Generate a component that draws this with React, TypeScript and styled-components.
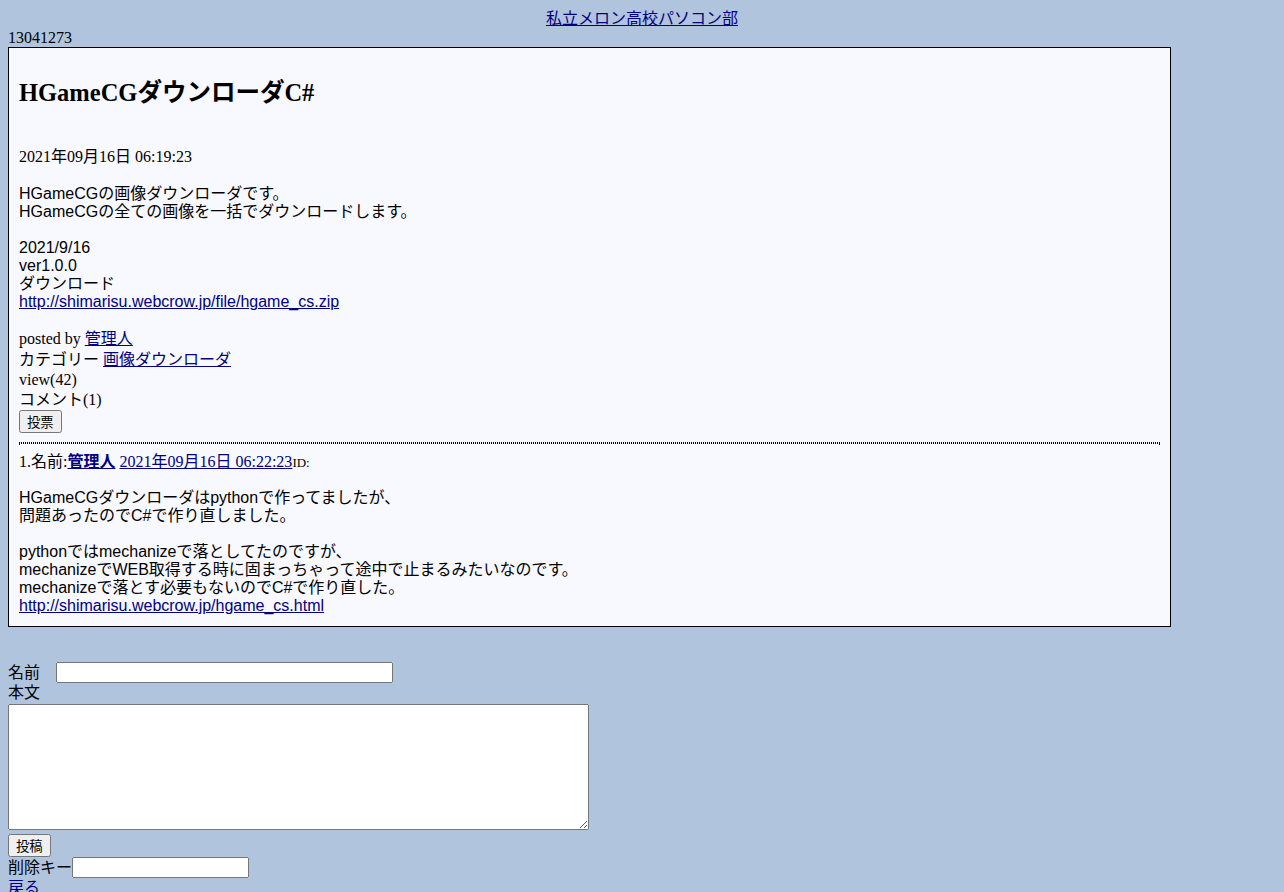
import styled, { createGlobalStyle } from "styled-components";

const GlobalStyle = createGlobalStyle`
  body {
    margin: 8px;
    background-color: #b0c4de;
    color: #000;
    font-family: "Liberation Serif", "Noto Sans CJK JP", serif;
    font-size: 16px;
  }
  a {
    color: #000080;
  }
`;

const Header = styled.div`
  text-align: center;
  line-height: 21px;
`;

const Counter = styled.div`
  line-height: 18px;
`;

const Entry = styled.div`
  width: 90%;
  padding: 10px 10px 11px;
  border: 1px solid #000;
  background-color: #f8f8ff;
`;

const Title = styled.h2`
  margin: 20px 0 0;
  font-size: 24.5px;
  line-height: 29px;
  font-weight: bold;
`;

const Stamp = styled.div`
  margin-top: 41px;
  line-height: 18px;
`;

const Body = styled.div<{ $gap?: number }>`
  margin-top: ${({ $gap }) => $gap ?? 18}px;
  font-family: "Liberation Sans", "Noto Sans CJK JP", sans-serif;
  font-size: 16px;
  line-height: 18px;
`;

const Meta = styled.div`
  margin-top: 18px;
`;

const Line = styled.div<{ $h?: number }>`
  line-height: ${({ $h }) => $h ?? 20}px;
`;

const Button = styled.button<{ $h: number }>`
  display: block;
  box-sizing: border-box;
  height: ${({ $h }) => $h}px;
  padding: 0 6px;
  font-family: "Noto Sans CJK JP", sans-serif;
  font-size: 13.33px;
  line-height: 16px;
`;

const Rule = styled.hr`
  margin: 9px 0 8px;
  height: 0;
  border: 1px dotted #000;
`;

const CommentHead = styled.div`
  line-height: 20px;
`;

const Small = styled.span`
  font-size: 13px;
`;

const Form = styled.form`
  margin-top: 35px;
  font-family: "Liberation Sans", "Noto Sans CJK JP", sans-serif;
  font-size: 16px;
  line-height: 20px;
`;

const Field = styled.div`
  display: flex;
  align-items: center;
`;

const Label = styled.span<{ $pad?: number }>`
  margin-right: ${({ $pad }) => $pad ?? 0}px;
`;

const TextInput = styled.input<{ $w: number }>`
  width: ${({ $w }) => $w}px;
  height: 21px;
  box-sizing: border-box;
  font-size: 13.33px;
`;

const Textarea = styled.textarea`
  display: block;
  width: 581px;
  height: 126px;
  box-sizing: border-box;
  margin: 1px 0 4px;
`;

const Back = styled.a`
  display: block;
  text-decoration: none;
`;

export default function App() {
  return (
    <>
      <GlobalStyle />
      <Header>
        <a href="#">私立メロン高校パソコン部</a>
      </Header>
      <Counter>13041273</Counter>
      <Entry>
        <Title>HGameCGダウンローダC#</Title>
        <Stamp>2021年09月16日 06:19:23</Stamp>
        <Body $gap={19}>
          HGameCGの画像ダウンローダです。
          <br />
          HGameCGの全ての画像を一括でダウンロードします。
          <br />
          <br />
          2021/9/16
          <br />
          ver1.0.0
          <br />
          ダウンロード
          <br />
          <a href="#">http://shimarisu.webcrow.jp/file/hgame_cs.zip</a>
        </Body>
        <Meta>
          <Line>
            posted by <a href="#">管理人</a>
          </Line>
          <Line $h={21}>
            カテゴリー <a href="#">画像ダウンローダ</a>
          </Line>
          <Line>view(42)</Line>
          <Line>コメント(1)</Line>
          <Button type="button" $h={23}>
            投票
          </Button>
        </Meta>
        <Rule />
        <CommentHead>
          1.名前:
          <a href="#">
            <b>管理人</b>
          </a>{" "}
          <a href="#">2021年09月16日 06:22:23</a>
          <Small>ID:</Small>
        </CommentHead>
        <Body $gap={16}>
          HGameCGダウンローダはpythonで作ってましたが、
          <br />
          問題あったのでC#で作り直しました。
          <br />
          <br />
          pythonではmechanizeで落としてたのですが、
          <br />
          mechanizeでWEB取得する時に固まっちゃって途中で止まるみたいなのです。
          <br />
          mechanizeで落とす必要もないのでC#で作り直した。
          <br />
          <a href="#">http://shimarisu.webcrow.jp/hgame_cs.html</a>
        </Body>
      </Entry>
      <Form onSubmit={(e) => e.preventDefault()}>
        <Field>
          <Label $pad={16}>名前</Label>
          <TextInput $w={337} />
        </Field>
        <div>本文</div>
        <Textarea />
        <Button type="button" $h={23}>
          投稿
        </Button>
        <Field>
          <Label>削除キー</Label>
          <TextInput $w={177} type="password" />
        </Field>
        <Back href="#">戻る</Back>
      </Form>
    </>
  );
}
